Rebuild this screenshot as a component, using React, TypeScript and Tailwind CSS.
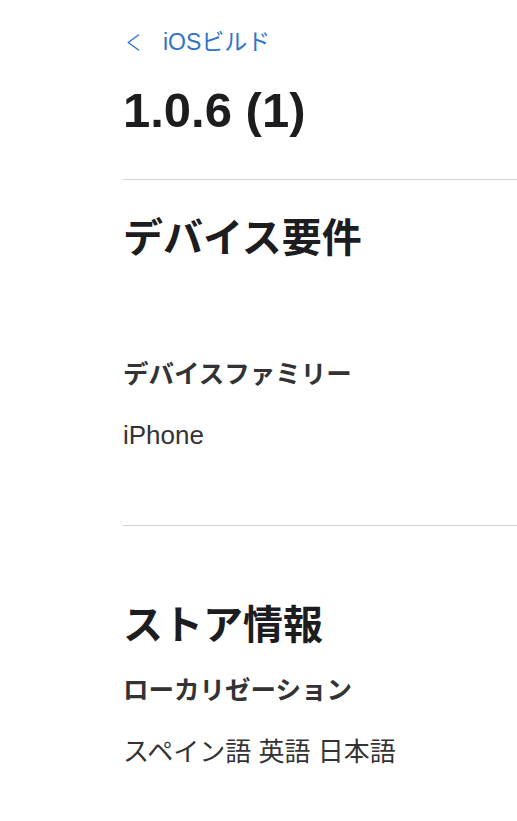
import { ReactNode } from "react";

const font = {
  fontFamily: '"Liberation Sans", "Noto Sans CJK JP", sans-serif',
};

function Divider({ className = "" }: { className?: string }) {
  return <div className={`h-px bg-[#d2d2d7] ${className}`} />;
}

function Field({ label, value, className = "" }: { label: string; value: ReactNode; className?: string }) {
  return (
    <div className={className}>
      <h3 className="text-[25.5px] leading-[36px] font-bold text-[#333336]">{label}</h3>
      <p className="mt-[25px] text-[26px] leading-[36px] text-[#333336]">{value}</p>
    </div>
  );
}

export default function App() {
  return (
    <div className="min-h-screen bg-white pl-[123px] pt-[28px]" style={font}>
      {/* back link */}
      <a className="flex items-center h-[28px] text-[23px] text-[#2f74c8] cursor-pointer">
        <svg width="13" height="17" viewBox="0 0 13 17" className="ml-[4px]">
          <path d="M11.5 1 L1.2 8.5 L11.5 16" fill="none" stroke="currentColor" strokeWidth="1.4" strokeLinecap="round" strokeLinejoin="round" />
        </svg>
        <span className="ml-[23px]">iOSビルド</span>
      </a>

      <h1 className="mt-[26px] text-[49px] leading-[56px] font-bold text-[#1d1d1f]">1.0.6 (1)</h1>

      <Divider className="mt-[41px]" />

      <h2 className="mt-[34px] text-[40px] leading-[48px] font-bold text-[#1d1d1f]">デバイス要件</h2>
      <Field className="mt-[94px]" label="デバイスファミリー" value="iPhone" />

      <Divider className="mt-[72px]" />

      <h2 className="mt-[75px] text-[40px] leading-[48px] font-bold text-[#1d1d1f]">ストア情報</h2>
      <div className="mt-[23px]">
        <h3 className="text-[25.5px] leading-[36px] font-bold text-[#333336]">ローカリゼーション</h3>
        <p className="mt-[26px] text-[26px] leading-[36px] text-[#333336]">スペイン語 英語 日本語</p>
      </div>
    </div>
  );
}
